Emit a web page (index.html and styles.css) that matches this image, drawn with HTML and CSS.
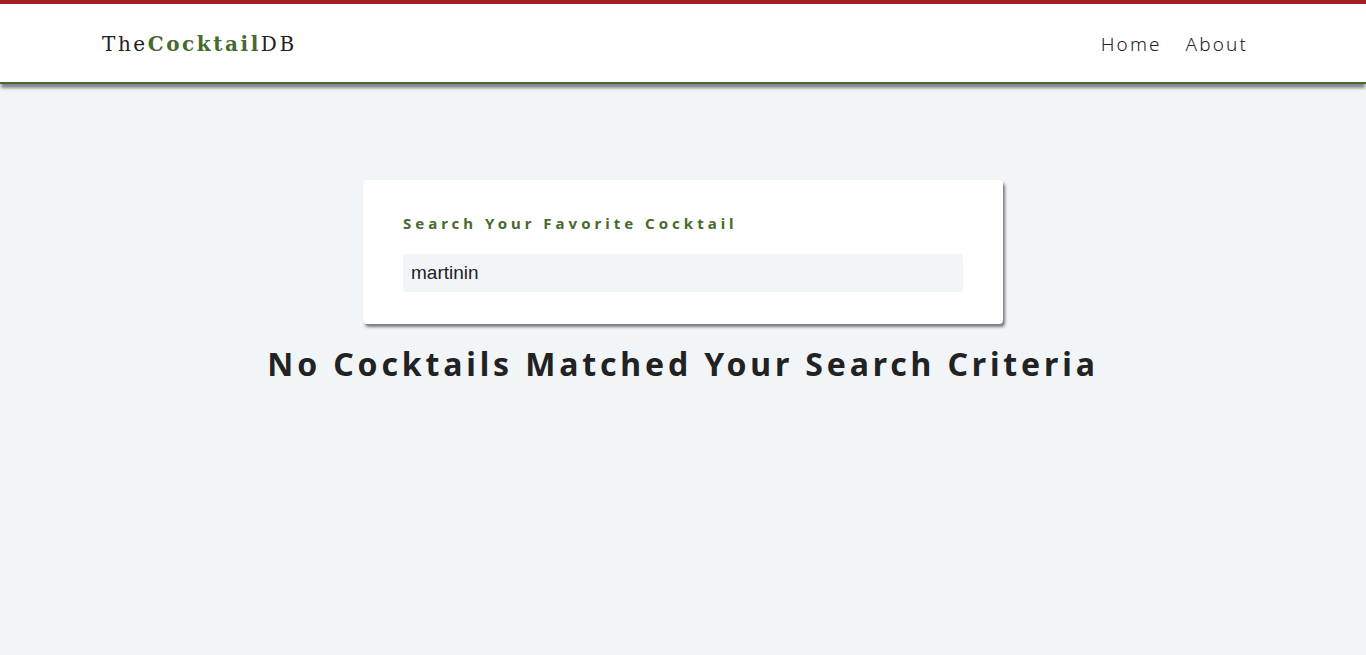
FILE: index.html
```html
<!DOCTYPE html>
<html lang="en">
<head>
<meta charset="utf-8">
<title>TheCocktailDB</title>
<link rel="stylesheet" href="styles.css">
</head>
<body>
<nav class="navbar">
  <div class="nav-center">
    <a class="logo" href="#">The<span class="logo-bold">Cocktail</span>DB</a>
    <ul class="nav-links">
      <li><a href="#">Home</a></li>
      <li><a href="#">About</a></li>
    </ul>
  </div>
</nav>
<main class="main">
  <section class="search">
    <form class="search-form">
      <label class="search-label" for="name">Search Your Favorite Cocktail</label>
      <input class="search-input" type="text" id="name" value="martinin">
    </form>
  </section>
  <h2 class="section-title">No Cocktails Matched Your Search Criteria</h2>
</main>
</body>
</html>
```
FILE: styles.css
```css
* { box-sizing: border-box; margin: 0; padding: 0; }
html, body { height: 100%; }
body {
  background: #f1f5f8;
  font-family: "Noto Sans", "Open Sans", sans-serif;
  color: #222;
}
.navbar {
  background: #fff;
  border-top: 4px solid #a61e23;
  border-bottom: 2px solid #476a2e;
  height: 84px;
  box-shadow: 0 5px 3px -1px rgba(0,0,0,0.45);
  display: flex;
  align-items: center;
}
.nav-center {
  width: 1164px;
  margin: 0 auto;
  padding: 2px 0 0 1px;
  display: flex;
  justify-content: space-between;
  align-items: center;
}
.logo {
  font-family: "DejaVu Serif", serif;
  font-size: 20px;
  letter-spacing: 2.55px;
  color: #222;
  text-decoration: none;
}
.logo-bold { font-weight: bold; color: #476a2e; }
.nav-links { list-style: none; display: flex; gap: 24px; padding-right: 17px; }
.nav-links a {
  text-decoration: none;
  color: #222;
  font-size: 19px;
  letter-spacing: 2.1px;
  font-weight: 300;
}
.main { padding-top: 96px; display: flex; flex-direction: column; align-items: center; }
.search-form {
  width: 640px;
  background: #fff;
  border-radius: 4px;
  padding: 33px 40px 32px;
  box-shadow: 2px 3px 3px rgba(0,0,0,0.5);
  display: flex;
  flex-direction: column;
}
.search-label {
  color: #476a2e;
  font-weight: bold;
  font-size: 15px;
  letter-spacing: 4px;
  margin-bottom: 21px;
  line-height: 20px;
}
.search-input {
  height: 38px;
  border: none;
  border-radius: 4px;
  background: #f1f5f8;
  font-family: "Liberation Sans", Arial, sans-serif;
  font-size: 19px;
  padding: 0 8px;
  color: #222;
  outline: none;
}
.section-title {
  margin-top: 20px;
  font-size: 32px;
  letter-spacing: 3.85px;
  font-weight: bold;
  color: #222;
  line-height: 40px;
}
```
